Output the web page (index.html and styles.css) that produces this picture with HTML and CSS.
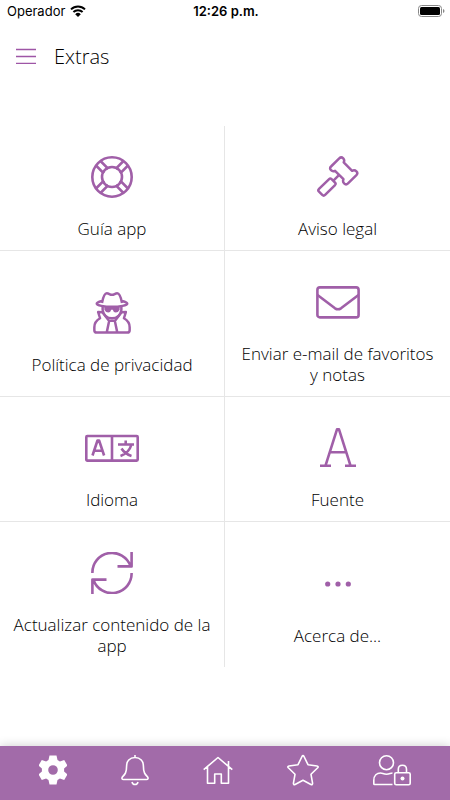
FILE: index.html
```
<!DOCTYPE html>
<html lang="es">
<head>
    <meta charset="UTF-8">
    <meta name="viewport" content="width=device-width, initial-scale=1.0">
    <title>Extras</title>
    <link rel="stylesheet" href="styles.css">
</head>
<body>
<div class="status-bar">
    <div class="carrier">
        <span>Operador</span>
        <svg width="16" height="12" viewBox="0 0 16 12">
            <path d="M1 4.400a10 10 0 0 1 14 0M3.400 7a6.600 6.600 0 0 1 9.200 0" fill="none" stroke="#000" stroke-width="2"/>
            <path d="M5.200 9.200a4 4 0 0 1 5.600 0L8 12z"/>
        </svg>
    </div>
    <div class="clock">12:26 p.m.</div>
    <svg class="battery" width="27" height="12" viewBox="0 0 27 12">
        <rect x="0.500" y="0.500" width="23" height="11" rx="3" fill="none" stroke="#888"/>
        <rect x="2" y="2" width="20" height="8" rx="1.500"/>
        <path d="M25 4v4q1.500-.5 1.500-2T25 4z" fill="#888"/>
    </svg>
</div>

<header class="header">
    <button class="menu-button" type="button" aria-label="Menú">
        <svg width="20" height="16" viewBox="0 0 20 16">
            <path d="M0 1.500h20M0 8.500h20M0 15.300h20"/>
        </svg>
    </button>
    <h1>Extras</h1>
</header>

<main class="grid">
    <a class="tile" href="#guia">
        <svg class="icon" width="42" height="42" viewBox="0 0 42 42">
            <circle cx="21" cy="21" r="19.700"/>
            <circle cx="21" cy="21" r="10"/>
            <path d="M5 9.500l7.800 7.800M9.500 5l7.800 7.800M37 9.500l-7.800 7.800M32.500 5l-7.800 7.800M5 32.500l7.800-7.800M9.500 37l7.800-7.800M37 32.500l-7.800-7.800M32.500 37l-7.800-7.800"/>
        </svg>
        <span>Guía app</span>
    </a>
    <a class="tile" href="#aviso">
        <svg class="icon" width="44" height="42" viewBox="0 0 44 44">
            <path d="M23.300 2.400Q25.400.4 27.500 2.400Q29.200 4.200 28 6.600L36.800 15.500Q39.300 14.200 41.300 16.100Q43.200 18 41.300 20L32.500 28.700Q30.400 30.700 28.400 28.700Q26.600 27 27.700 24.300L18.900 15.500Q16.300 16.600 14.700 14.900Q12.700 12.900 14.700 11z"/>
            <path d="M23.200 19.900l-6.500 6.500M12.700 24.200q1.200-1.200 2.600 0l3.600 3.600q1.200 1.300 0 2.600L8.500 40.800q-1.500 1.500-3 0L2.100 37.400q-1.500-1.500 0-3z"/>
        </svg>
        <span>Aviso legal</span>
    </a>
    <a class="tile" href="#privacidad">
        <svg class="icon" width="40" height="42" viewBox="0 0 40 44">
            <path d="M9.500 11.500Q11.500 1.400 14.500 1.400C17 1.400 17.500 3 20 3S23 1.400 25.500 1.400Q28.500 1.400 30.500 11.500M9.500 9.500Q4 11 4 12.300C4 14 12 15.500 20 15.500S36 14 36 12.300Q36 11 30.500 9.500"/>
            <path d="M10.200 15v4q1.500 8.500 9.800 8.500T29.800 19v-4"/>
            <path class="fill" d="M12 15h16v3.500q-1.500 3-4 3T20.800 18.500h-1.600Q18.500 21.500 16 21.500T12 18.500z"/>
            <path d="M10 21.300l-4.500-.3 2 6.500Q1.500 30.800 1.500 37v3q0 2.500 2.500 2.500h32q2.500 0 2.500-2.500v-3q0-6.200-6-9.500l2-6.500-4.500.3M10 21.300l7 9-2.500 12M30 21.300l-7 9 2.500 12M17 30h6"/>
        </svg>
        <span>Política de privacidad</span>
    </a>
    <a class="tile" href="#enviar">
        <svg class="icon" width="44" height="42" viewBox="0 0 44 42">
            <rect x="1.400" y="6.400" width="41.200" height="30" rx="2.500"/>
            <path d="M1.500 14L19 27.300q3 2 6 0L42.500 14"/>
        </svg>
        <span>Enviar e-mail de favoritos y notas</span>
    </a>
    <a class="tile" href="#idioma">
        <svg class="icon" width="54" height="42" viewBox="0 0 54 42">
            <rect x="1.300" y="9" width="51.400" height="24.600" rx="1"/>
            <path d="M27 9v24.600M7.500 28.500l5-15h1.600l5 15M9.300 23.700h8M33 17.500h16M40.700 13.500v4M46.500 17.500Q44 26 35.500 29M36.500 21.500Q40 27 46.500 29"/>
        </svg>
        <span>Idioma</span>
    </a>
    <a class="tile" href="#fuente">
        <svg class="icon" width="36" height="42" viewBox="0 0 36 42">
            <path d="M0 38.700h11M25 38.700h11M5.500 38.700L17 2.300h2l11.500 36.400M9.500 25.300h17"/>
        </svg>
        <span>Fuente</span>
    </a>
    <a class="tile" href="#actualizar">
        <svg class="icon" width="42" height="42" viewBox="0 0 42 42">
            <path d="M1.400 21A19.600 19.600 0 0 1 39.500 14M40.600 0v14.400H26.500M40.600 21A19.600 19.600 0 0 1 2.500 28M1.400 42V27.600h14.100"/>
        </svg>
        <span>Actualizar contenido de la app</span>
    </a>
    <a class="tile" href="#acerca">
        <svg class="icon" width="26" height="42" viewBox="0 0 26 42">
            <g class="fill">
                <circle cx="2.700" cy="21" r="2.600"/>
                <circle cx="13" cy="21" r="2.600"/>
                <circle cx="23.300" cy="21" r="2.600"/>
            </g>
        </svg>
        <span>Acerca de...</span>
    </a>
</main>

<nav class="tab-bar">
    <a href="#ajustes" aria-label="Ajustes">
        <svg width="28" height="32" viewBox="0 0 28 32">
            <path class="solid" fill-rule="evenodd" d="M10.500 1.500h7l1 4.500 2.400 1.400 4.300-1.500 3.300 5.700-3.400 3v2.800l3.400 3-3.300 5.700-4.300-1.500-2.400 1.400-1 4.500h-7l-1-4.500-2.400-1.400-4.300 1.500-3.300-5.700 3.400-3v-2.800l-3.400-3 3.300-5.700 4.300 1.500L9.500 6zM14 11.200a4.800 4.800 0 1 0 0 9.600 4.800 4.800 0 1 0 0-9.600z"/>
        </svg>
    </a>
    <a href="#avisos" aria-label="Notificaciones">
        <svg width="28" height="32" viewBox="0 0 28 32">
            <path d="M14 1v3M14 3.500C8.500 3.500 5.600 7.500 5.600 12C5.600 18.500 4 20.300 1.700 22.600C.3 24.200 1 25.500 2.500 25.500h23C27 25.500 27.700 24.200 26.300 22.600C24 20.300 22.400 18.500 22.400 12C22.400 7.500 19.500 3.500 14 3.500zM11 28q.5 2.500 3 2.500t3-2.500"/>
        </svg>
    </a>
    <a href="#inicio" aria-label="Inicio">
        <svg width="30" height="32" viewBox="0 0 30 32">
            <path d="M.7 15.700L15 3.500l14.300 12.200M4.500 13v16.200h7.200V20h6.600v9.200h7.200V13M25.500 12V7"/>
        </svg>
    </a>
    <a href="#favoritos" aria-label="Favoritos">
        <svg width="32" height="32" viewBox="0 0 32 32">
            <path d="M15 2.500q1-1.700 2 0l4 8.200 9 1.300q1.800.4.700 1.800l-6.700 6.500 1.600 9q0 1.800-1.700 1.200L16 26.300 8.100 30.500q-1.700.6-1.700-1.200l1.600-9-6.700-6.500Q.2 12.400 2 12l9-1.300z"/>
        </svg>
    </a>
    <a href="#cuenta" aria-label="Cuenta">
        <svg width="38" height="32" viewBox="0 0 38 32">
            <circle cx="13.500" cy="8.700" r="7"/>
            <path d="M19.500 30.500H1.500q-.7 0-.7-.8v-3.200C.8 21.500 4 19 7.500 19c2 0 3 1.200 6 1.200s4-1.200 6-1.200"/>
            <rect x="21.700" y="18.800" width="15.500" height="11.900" rx="1.500"/>
            <path d="M25.300 18.500v-3.300q0-3.900 4.100-3.900t4.100 3.900v3.300"/>
            <circle class="solid" cx="29.500" cy="24.500" r="2"/>
        </svg>
    </a>
</nav>
</body>
</html>
```
FILE: styles.css
```
* {
    box-sizing: border-box;
}

body {
    margin: 0;
    min-height: 100vh;
    display: flex;
    flex-direction: column;
    background-color: #fff;
    color: #000;
    font-family: "Open Sans", sans-serif;
    font-weight: 300;
}

a {
    color: inherit;
    text-decoration: none;
}

.status-bar {
    display: grid;
    grid-template-columns: 1fr auto 1fr;
    align-items: center;
    height: 22px;
    padding: 0 5px 0 7px;
    color: #000;
    font-family: Inter, sans-serif;
    font-size: 13px;
    font-weight: 400;
}

.carrier {
    display: flex;
    align-items: center;
    gap: 5px;
}

.clock {
    font-weight: 600;
}

.battery {
    justify-self: end;
}

.header {
    display: flex;
    align-items: center;
    gap: 18px;
    height: 68px;
    padding: 0 16px;
}

.menu-button {
    display: flex;
    padding: 0;
    border: none;
    background: none;
    cursor: pointer;
}

.menu-button svg {
    stroke: #9e56a6;
    stroke-width: 1.3;
}

h1 {
    margin: 0;
    font-size: 20px;
    font-weight: 300;
}

.grid {
    display: grid;
    grid-template-columns: 1fr 1fr;
    margin: 36px 0;
}

.tile {
    display: flex;
    flex-direction: column;
    align-items: center;
    justify-content: center;
    gap: 20px;
    padding: 30px 12px 11px;
    border-bottom: 1px solid #e6e6e6;
    font-size: 17px;
    line-height: 21px;
    text-align: center;
}

.tile:nth-child(odd) {
    border-right: 1px solid #e6e6e6;
}

.tile:nth-last-child(-n+2) {
    border-bottom: none;
}

.icon {
    fill: none;
    stroke: #a05fa8;
    stroke-width: 2.6;
    stroke-linejoin: round;
}

.icon .fill {
    fill: #a05fa8;
    stroke: none;
}

.tab-bar {
    display: flex;
    align-items: flex-start;
    justify-content: space-between;
    height: 54px;
    margin-top: auto;
    padding: 8px 39px;
    background-color: #a26ba9;
    box-shadow: 0 0 10px rgba(0, 0, 0, 0.2);
}

.tab-bar svg {
    display: block;
    fill: none;
    stroke: #fff;
    stroke-width: 1.6;
    stroke-linejoin: round;
}

.tab-bar .solid {
    fill: #fff;
    stroke: none;
}
```
